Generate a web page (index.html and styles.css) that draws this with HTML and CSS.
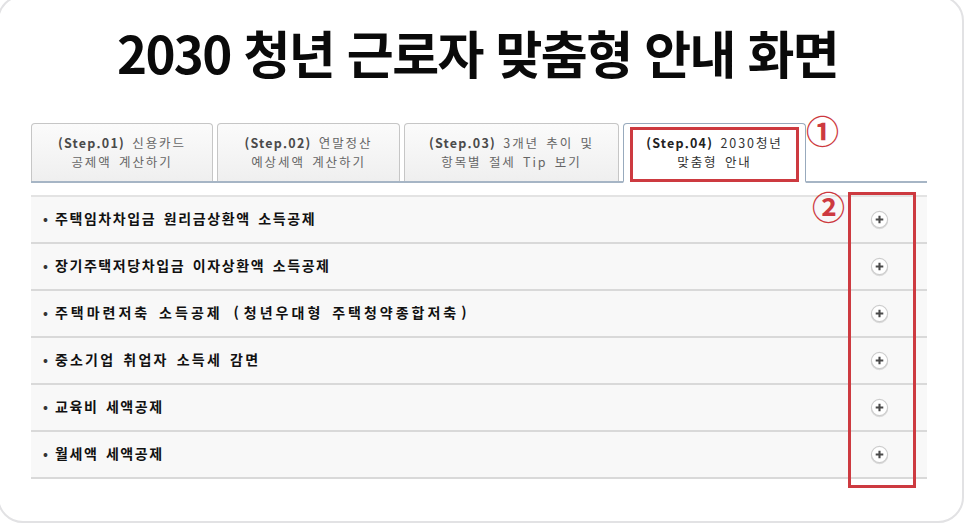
FILE: index.html
```html
<!DOCTYPE html>
<html lang="ko">
<head>
<meta charset="utf-8">
<title>2030 청년 근로자 맞춤형 안내 화면</title>
<link rel="stylesheet" href="styles.css">
</head>
<body>
<div class="card">
  <h1 class="title">2030 청년 근로자 맞춤형 안내 화면</h1>
  <div class="panel">
    <div class="tabs">
      <div class="tab tab-1"><b>(Step.01)</b> 신용카드<br>공제액 계산하기</div>
      <div class="tab tab-2"><b>(Step.02)</b> 연말정산<br>예상세액 계산하기</div>
      <div class="tab tab-3"><b>(Step.03)</b> 3개년 추이 및<br>항목별 절세 Tip 보기</div>
      <div class="tab tab-4 active"><b>(Step.04)</b> 2030청년<br>맞춤형 안내<span class="mark-box mark-box-1"></span></div>
    </div>
    <ul class="list">
      <li class="row"><span class="label"><span class="dot">•</span>주택임차차입금 원리금상환액 소득공제</span><svg class="plus" viewBox="0 0 20 20"><circle cx="10" cy="10" r="8.5"/><path d="M10 6v8M6 10h8"/></svg></li>
      <li class="row"><span class="label"><span class="dot">•</span>장기주택저당차입금 이자상환액 소득공제</span><svg class="plus" viewBox="0 0 20 20"><circle cx="10" cy="10" r="8.5"/><path d="M10 6v8M6 10h8"/></svg></li>
      <li class="row"><span class="label label-wide"><span class="dot">•</span>주택마련저축 소득공제 <span class="paren">(</span>청년우대형 주택청약종합저축<span class="paren">)</span></span><svg class="plus" viewBox="0 0 20 20"><circle cx="10" cy="10" r="8.5"/><path d="M10 6v8M6 10h8"/></svg></li>
      <li class="row"><span class="label label-mid"><span class="dot">•</span>중소기업 취업자 소득세 감면</span><svg class="plus" viewBox="0 0 20 20"><circle cx="10" cy="10" r="8.5"/><path d="M10 6v8M6 10h8"/></svg></li>
      <li class="row"><span class="label"><span class="dot">•</span>교육비 세액공제</span><svg class="plus" viewBox="0 0 20 20"><circle cx="10" cy="10" r="8.5"/><path d="M10 6v8M6 10h8"/></svg></li>
      <li class="row"><span class="label"><span class="dot">•</span>월세액 세액공제</span><svg class="plus" viewBox="0 0 20 20"><circle cx="10" cy="10" r="8.5"/><path d="M10 6v8M6 10h8"/></svg></li>
    </ul>
    <span class="num num-1">①</span>
    <span class="num num-2">②</span>
    <span class="mark-box mark-box-2"></span>
  </div>
</div>
</body>
</html>
```
FILE: styles.css
```css
html, body {
  margin: 0;
  padding: 0;
  background: #ffffff;
  overflow: hidden;
}
body {
  width: 967px;
  height: 526px;
  font-family: "Noto Sans CJK KR", "Noto Sans", sans-serif;
}
.card {
  box-sizing: border-box;
  width: 967px;
  height: 528px;
  margin: -5px 0 0 -3px;
  border: 2px solid #e2e2e4;
  border-radius: 26px;
  background: #ffffff;
}
.title {
  margin: 0;
  padding: 25px 6px 0 0;
  font-size: 51px;
  line-height: 60px;
  font-weight: 700;
  letter-spacing: -1.6px;
  color: #0a0a0a;
  text-align: center;
}
.panel {
  position: relative;
  width: 896px;
  margin: 41px 0 0 32px;
}
.tabs {
  display: flex;
  align-items: flex-end;
  gap: 4px;
  height: 58px;
  border-bottom: 2px solid #a6b5c5;
}
.tab {
  position: relative;
  box-sizing: border-box;
  height: 58px;
  border: 1px solid #c6c6c6;
  border-bottom: none;
  border-radius: 4px 4px 0 0;
  background: linear-gradient(#fbfbfb, #efefef);
  padding-top: 9px;
  font-size: 12.5px;
  line-height: 19px;
  letter-spacing: 1.9px;
  word-spacing: 2px;
  color: #666;
  text-align: center;
}
.tab b {
  font-weight: 700;
  letter-spacing: 1.2px;
  color: #4a4a4a;
}
.tab-1 { width: 182px; }
.tab-2 { width: 183px; }
.tab-3 { width: 215px; }
.tab-4 { width: 183px; }
.tab.active {
  height: 60px;
  margin-bottom: -2px;
  border: 1px solid #98aabd;
  border-bottom: 2px solid #ffffff;
  background: #ffffff;
  color: #333;
}
.tab.active b {
  color: #222;
}
.list {
  list-style: none;
  margin: 12px 0 0 0;
  padding: 0;
  border-top: 2px solid #e3e3e3;
}
.row {
  display: flex;
  align-items: center;
  justify-content: space-between;
  height: 45px;
  border-bottom: 2px solid #d9d9d9;
  background: #f8f8f8;
  padding: 0 38px 0 12px;
}
.label {
  font-size: 14px;
  line-height: 20px;
  margin-top: -3px;
  font-weight: 700;
  letter-spacing: 1.6px;
  word-spacing: 2px;
  color: #111111;
}
.label-wide {
  letter-spacing: 3px;
}
.label-mid {
  letter-spacing: 2.2px;
}
.paren {
  margin: 0 2px;
}
.dot {
  font-size: 13px;
  margin-right: 7px;
  letter-spacing: 0;
  color: #333;
}
.plus {
  width: 19px;
  height: 19px;
  filter: drop-shadow(0 1px 0.5px rgba(0,0,0,0.12));
}
.plus circle {
  fill: #ffffff;
  stroke: #cdcdcd;
  stroke-width: 1.2;
}
.plus path {
  stroke: #4a4a4a;
  stroke-width: 2.2;
  fill: none;
}
.mark-box {
  position: absolute;
  box-sizing: border-box;
  border: 3px solid #cd3a40;
}
.mark-box-1 {
  left: 6px;
  top: 3px;
  width: 169px;
  height: 55px;
}
.mark-box-2 {
  left: 817px;
  top: 69px;
  width: 68px;
  height: 296px;
}
.num {
  position: absolute;
  font-size: 33px;
  line-height: 33px;
  font-weight: 700;
  color: #cd3a40;
}
.num-1 {
  left: 775px;
  top: -9px;
}
.num-2 {
  left: 781px;
  top: 67px;
}
```
